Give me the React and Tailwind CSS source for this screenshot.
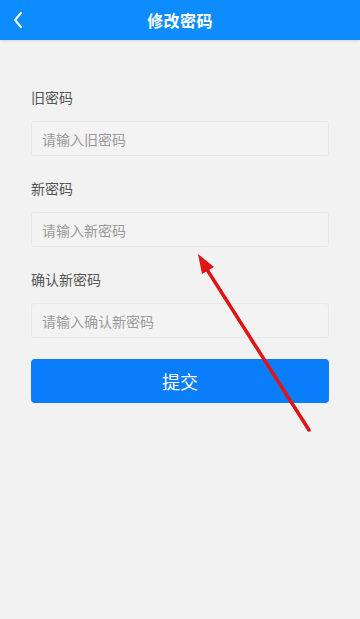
import React from "react";

// ChangePassword

const fields = [
  { label: "旧密码", placeholder: "请输入旧密码" },
  { label: "新密码", placeholder: "请输入新密码" },
  { label: "确认新密码", placeholder: "请输入确认新密码" },
];

export default function App() {
  return (
    <div
      className="relative w-[360px] h-[619px] bg-[#f2f2f2] overflow-hidden"
      style={{ fontFamily: '"Noto Sans CJK SC", "Noto Sans", sans-serif' }}
    >
      {/* Header */}
      <header className="relative h-10 bg-[#0d8dfd] flex items-center justify-center shadow-[0_1px_2px_rgba(0,0,0,0.12)]">
        <button className="absolute left-3 top-0 h-10 flex items-center text-white">
          <svg width="12" height="18" viewBox="0 0 12 18" fill="none">
            <path d="M9 2 L3 9 L9 16" stroke="white" strokeWidth="2" strokeLinecap="round" strokeLinejoin="round" />
          </svg>
        </button>
        <h1 className="text-white text-[16px] font-bold tracking-wide">修改密码</h1>
      </header>

      {/* Form */}
      <div className="px-[31px] pt-[47px]">
        {fields.map((f) => (
          <div key={f.label} className="mb-[22px]">
            <div className="text-[14px] leading-[20px] text-[#555] mb-[14px]">{f.label}</div>
            <input
              placeholder={f.placeholder}
              className="w-full h-[35px] px-[10px] rounded-[3px] bg-[#f3f3f3] border border-[#e8e8e8] text-[14px] text-[#333] placeholder:text-[#9a9a9a] outline-none"
            />
          </div>
        ))}

        <button className="w-full h-[44px] mt-[-1px] rounded-[4px] bg-[#0a7efa] text-white text-[18px]">
          提交
        </button>
      </div>

      {/* Annotation arrow */}
      <svg className="absolute left-0 top-0 pointer-events-none" width="360" height="619">
        <line x1="309" y1="430" x2="206" y2="268" stroke="#e01414" strokeWidth="3.5" strokeLinecap="round" />
        <polygon points="198,254 214,267 202,274" fill="#e01414" />
      </svg>
    </div>
  );
}
